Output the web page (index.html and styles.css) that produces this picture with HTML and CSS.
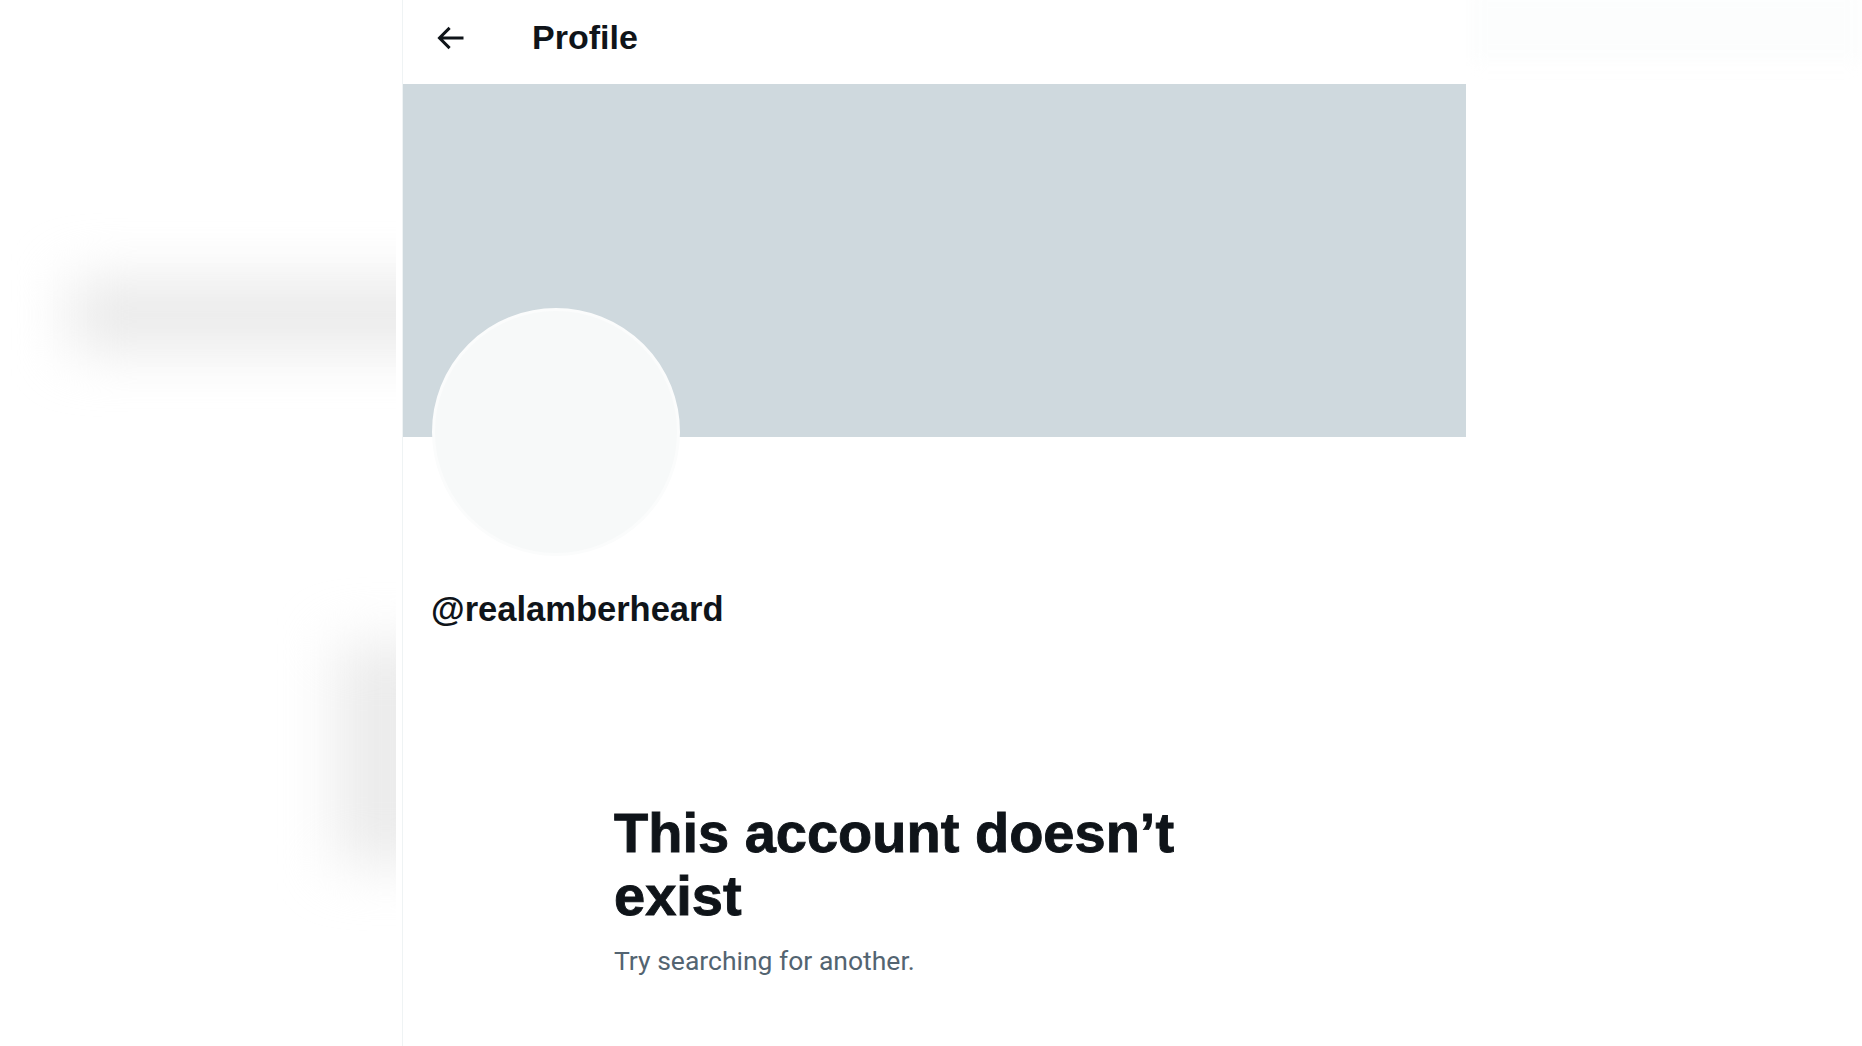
FILE: index.html
```html
<!DOCTYPE html>
<html lang="en">
<head>
<meta charset="utf-8">
<title>Profile</title>
<link rel="stylesheet" href="styles.css">
</head>
<body>
<div class="app">
  <aside class="sidebar">
    <div class="blur blur-nav"></div>
    <div class="blur blur-button"></div>
  </aside>
  <main class="column">
    <header class="topbar">
      <button class="back" aria-label="Back">
        <svg viewBox="0 0 24 24" width="36" height="36"><path d="M7.414 13l5.043 5.04-1.414 1.42L3.586 12l7.457-7.46 1.414 1.42L7.414 11H21v2H7.414z" fill="#0f1419"/></svg>
      </button>
      <h2 class="title">Profile</h2>
    </header>
    <div class="banner"></div>
    <div class="avatar-row">
      <div class="avatar"></div>
    </div>
    <div class="handle">@realamberheard</div>
    <section class="empty">
      <h1 class="empty-title">This account doesn’t exist</h1>
      <p class="empty-sub">Try searching for another.</p>
    </section>
  </main>
  <aside class="rightbar">
    <div class="blur blur-search"></div>
  </aside>
</div>
</body>
</html>
```

FILE: styles.css
```css
html, body {
  margin: 0;
  padding: 0;
  background: #ffffff;
}

body {
  font-family: "Liberation Sans", Arial, sans-serif;
  color: #0f1419;
}

.app {
  display: flex;
  height: 1046px;
  overflow: hidden;
}

.sidebar {
  width: 396px;
  flex: none;
  margin-right: 6px;
  overflow: hidden;
  display: flex;
  flex-direction: column;
}

.blur {
  filter: blur(28px);
}

.blur-nav {
  margin-top: 280px;
  margin-left: 70px;
  width: 420px;
  height: 70px;
  background: #e9e9e9;
  flex: none;
}

.blur-button {
  margin-top: 294px;
  margin-left: 336px;
  width: 100px;
  height: 220px;
  background: #ebebeb;
  flex: none;
}

.column {
  width: 1063px;
  flex: none;
  border-left: 1px solid #eff3f4;
  display: flex;
  flex-direction: column;
}

.topbar {
  height: 84px;
  display: flex;
  align-items: flex-start;
  padding-left: 29px;
  box-sizing: border-box;
}

.back {
  border: 0;
  background: transparent;
  padding: 0;
  margin: 20px 0 0;
  width: 36px;
  height: 36px;
  display: flex;
}

.title {
  margin: 17px 0 0 64px;
  font-size: 34px;
  font-weight: 700;
  line-height: 40px;
}

.banner {
  height: 353px;
  background: #cfd9de;
}

.avatar-row {
  margin-top: -129px;
  padding-left: 29px;
  display: flex;
}

.avatar {
  width: 242px;
  height: 242px;
  border-radius: 50%;
  border: 3px solid #fbfcfc;
  background: #f7f9f9;
}

.handle {
  margin-top: 33px;
  padding-left: 28px;
  font-size: 34.5px;
  font-weight: 700;
  line-height: 40px;
}

.empty {
  margin-top: 172px;
  padding-left: 211px;
  width: 600px;
}

.empty-title {
  margin: 0;
  font-size: 56px;
  line-height: 63px;
  font-weight: 700;
  -webkit-text-stroke: 0.9px #0f1419;
}

.empty-sub {
  margin: 17px 0 0;
  font-family: Roboto, "Liberation Sans", sans-serif;
  font-size: 26.5px;
  line-height: 34px;
  color: #536471;
}

.rightbar {
  flex: 1;
  overflow: hidden;
  display: flex;
  flex-direction: column;
}

.blur-search {
  filter: blur(8px);
  margin-top: -10px;
  margin-left: 4px;
  height: 72px;
  background: #fcfdfd;
}
```
